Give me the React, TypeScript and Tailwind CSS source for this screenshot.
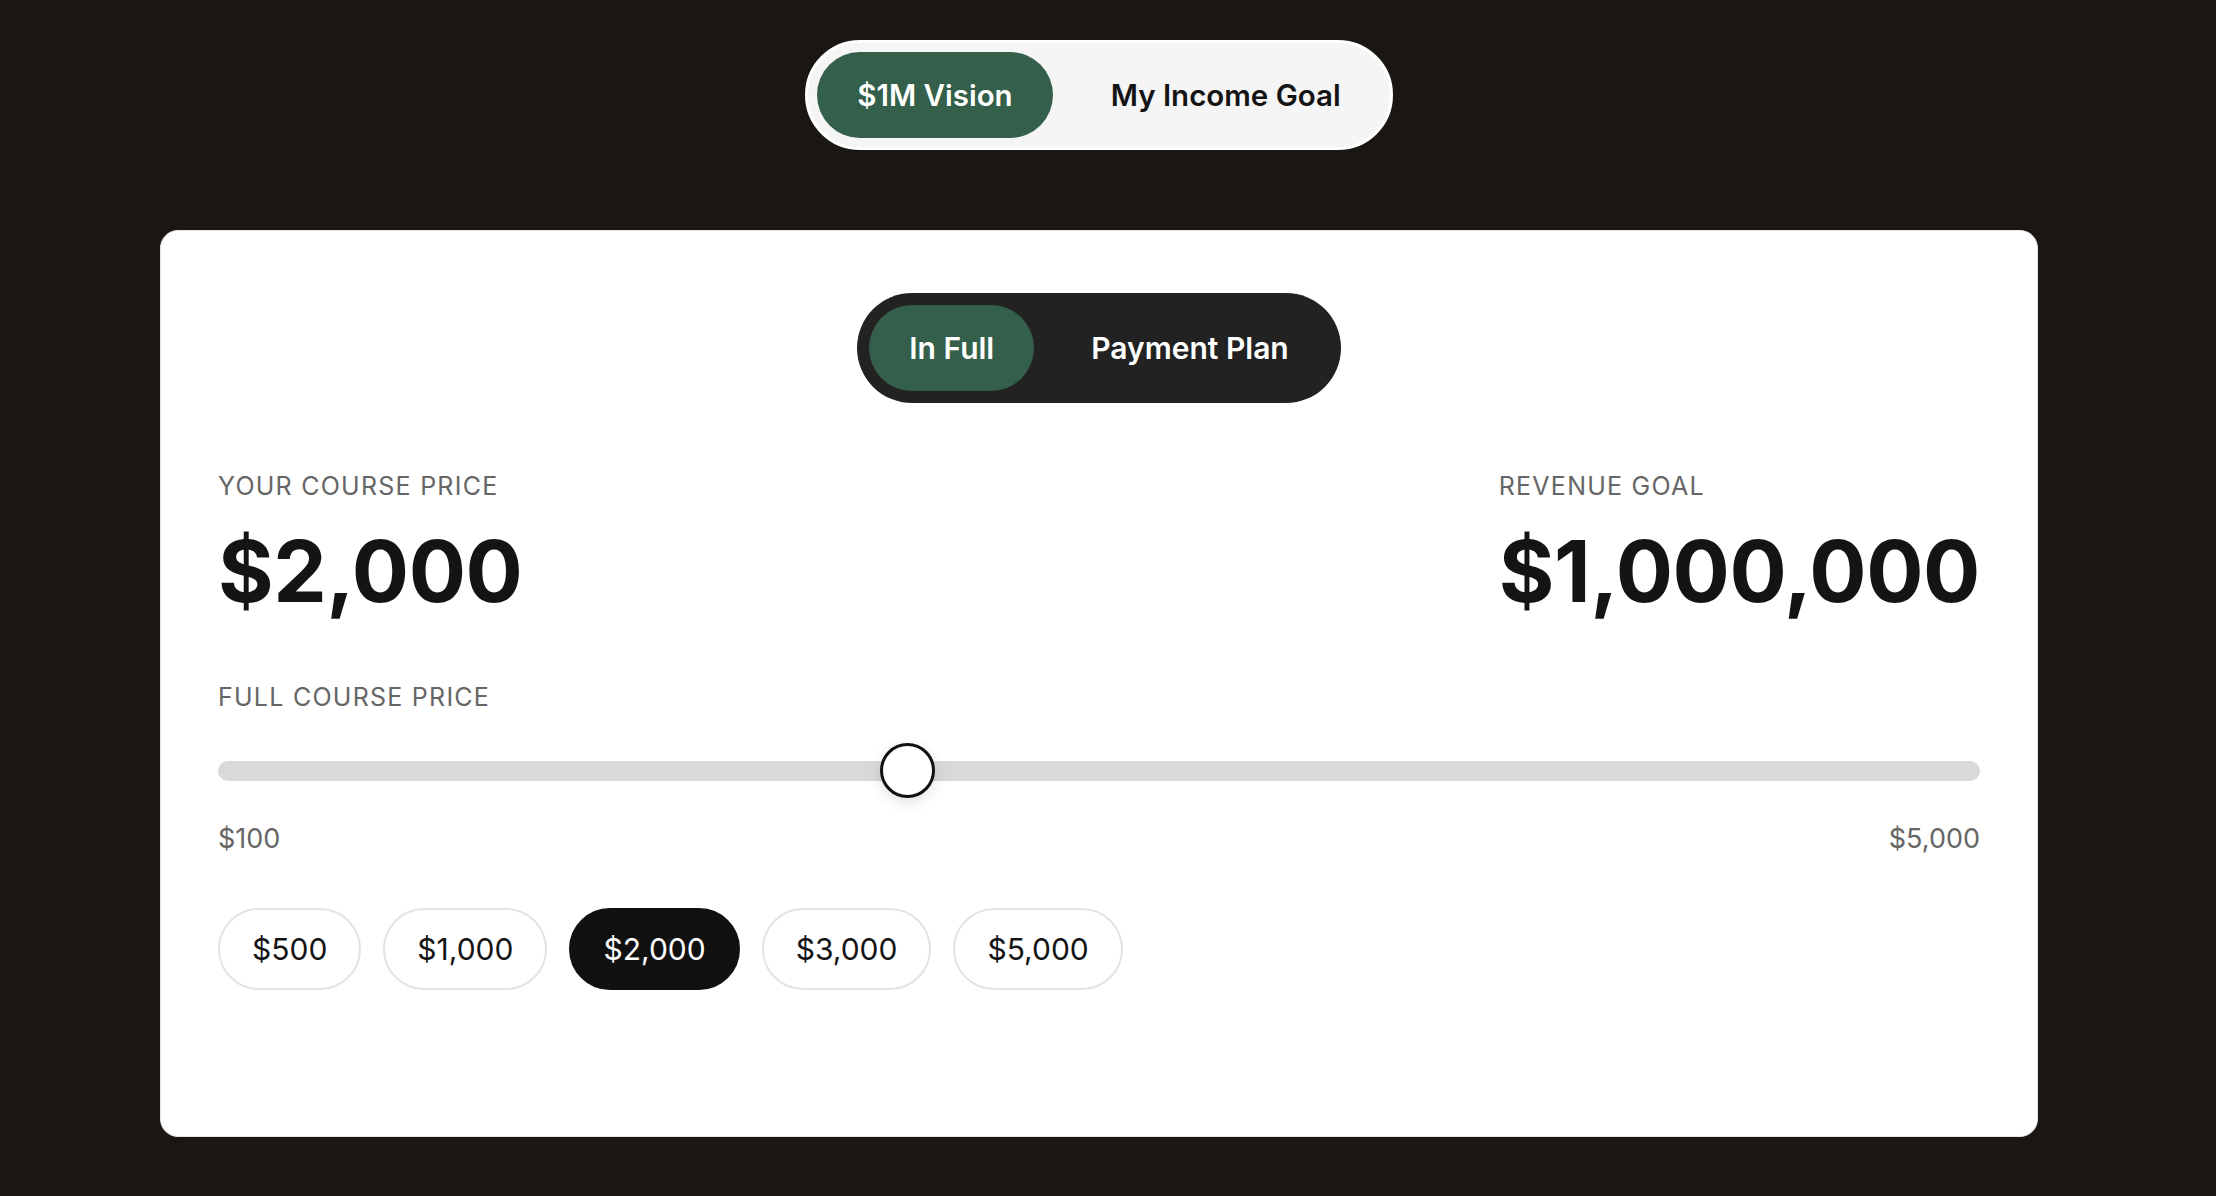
import { useState } from "react";

const MIN = 100;
const MAX = 5000;
const PRESETS = [500, 1000, 2000, 3000, 5000];

const fmt = (n: number) => "$" + n.toLocaleString("en-US");

function Segmented({
  options,
  value,
  onChange,
  dark,
}: {
  options: string[];
  value: string;
  onChange: (v: string) => void;
  dark?: boolean;
}) {
  const size = dark ? "text-[30px]" : "text-[29.5px]";
  return (
    <div
      className={
        dark
          ? "inline-flex items-center rounded-full bg-[#222222] p-[12px]"
          : "inline-flex items-center rounded-full border-[3px] border-white bg-[#f5f5f5] p-[9px]"
      }
    >
      {options.map((o) => {
        const active = o === value;
        return (
          <button
            key={o}
            onClick={() => onChange(o)}
            className={
              size +
              (active
                ? " h-[86px] rounded-full bg-[#345f4a] px-[40px] font-semibold text-white"
                : dark
                ? " h-[86px] rounded-full pl-[57px] pr-[40px] font-semibold text-white"
                : " h-[86px] rounded-full pl-[58px] pr-[40px] font-semibold text-[#141414]")
            }
          >
            {o}
          </button>
        );
      })}
    </div>
  );
}

export default function App() {
  const [mode, setMode] = useState("$1M Vision");
  const [plan, setPlan] = useState("In Full");
  const [price, setPrice] = useState(2000);

  const pct = (price - MIN) / (MAX - MIN);

  return (
    <div
      className="min-h-screen bg-[#1a1712] pr-[18px] pt-[40px] pb-[60px]"
      style={{ fontFamily: "Inter, 'Noto Sans', sans-serif" }}
    >
      <div className="flex justify-center">
        <Segmented
          options={["$1M Vision", "My Income Goal"]}
          value={mode}
          onChange={setMode}
        />
      </div>

      <div className="mx-auto mt-[80px] w-[1878px] rounded-[18px] border border-[#e4e4e4] bg-white px-[57px] pt-[62px] pb-[146px]">
        <div className="flex justify-center">
          <Segmented
            dark
            options={["In Full", "Payment Plan"]}
            value={plan}
            onChange={setPlan}
          />
        </div>

        <div className="mt-[68px] flex justify-between">
          <div>
            <div className="text-[25px] leading-[30px] tracking-[0.05em] text-[#666666]">
              YOUR COURSE PRICE
            </div>
            <div className="mt-[26px] text-[85px] font-bold leading-[90px] tracking-[-0.005em] text-[#141414]">
              {fmt(price)}
            </div>
          </div>
          <div>
            <div className="text-[25px] leading-[30px] tracking-[0.05em] text-[#666666]">
              REVENUE GOAL
            </div>
            <div className="mt-[26px] text-[85px] font-bold leading-[90px] tracking-[-0.005em] text-[#141414]">
              $1,000,000
            </div>
          </div>
        </div>

        <div className="mt-[65px] text-[25px] leading-[30px] tracking-[0.05em] text-[#666666]">
          FULL COURSE PRICE
        </div>

        <div className="relative mt-[31px] flex h-[55px] items-center">
          <div className="h-[20px] w-full rounded-full bg-[#d9d9d9]" />
          <div
            className="absolute top-0 h-[55px] w-[55px] rounded-full border-[3px] border-[#111111] bg-white shadow-[0_4px_14px_rgba(0,0,0,0.12)]"
            style={{ left: `calc(${pct} * (100% - 55px))` }}
          />
          <input
            type="range"
            min={MIN}
            max={MAX}
            step={100}
            value={price}
            onChange={(e) => setPrice(Number(e.target.value))}
            className="absolute inset-0 h-full w-full cursor-pointer opacity-0"
          />
        </div>

        <div className="mt-[26px] flex justify-between text-[27px] leading-[30px] text-[#666666]">
          <span>$100</span>
          <span>$5,000</span>
        </div>

        <div className="mt-[54px] flex gap-[22px]">
          {PRESETS.map((p) => (
            <button
              key={p}
              onClick={() => setPrice(p)}
              className={
                p === price
                  ? "h-[82px] rounded-full border-2 border-[#111111] bg-[#111111] px-[32px] text-[30px] text-white"
                  : "h-[82px] rounded-full border-2 border-[#e3e3e3] bg-white px-[32px] text-[30px] text-[#141414]"
              }
            >
              {fmt(p)}
            </button>
          ))}
        </div>
      </div>
    </div>
  );
}
